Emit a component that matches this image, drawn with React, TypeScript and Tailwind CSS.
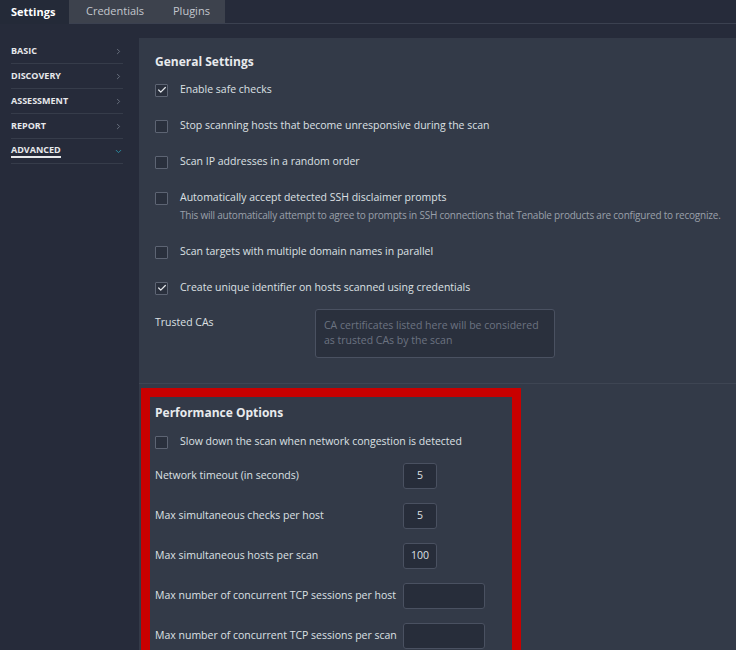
import { Check, ChevronRight, ChevronDown } from "lucide-react";

const font = { fontFamily: '"Open Sans", "Liberation Sans", sans-serif' };

const sideItems = ["BASIC", "DISCOVERY", "ASSESSMENT", "REPORT", "ADVANCED"];

function Box({ checked }: { checked?: boolean }) {
    return (
        <div className="w-[13px] h-[13px] shrink-0 border border-[#5d6473] bg-[#2a303d] rounded-[1px] flex items-center justify-center">
            {checked && <Check size={10} strokeWidth={3} className="text-[#e4e7eb]" />}
        </div>
    );
}

function CheckRow({ label, checked, className }: { label: string; checked?: boolean; className: string }) {
    return (
        <div className={`flex items-center h-4 ${className}`}>
            <Box checked={checked} />
            <span className="ml-[12px] text-[10.5px] text-[#dde0e4] whitespace-nowrap">{label}</span>
        </div>
    );
}

function NumRow({ label, value, wide, className }: { label: string; value?: string; wide?: boolean; className: string }) {
    return (
        <div className={`flex items-center h-[26px] ${className}`}>
            <span className="w-[248px] shrink-0 text-[10.5px] text-[#dde0e4] whitespace-nowrap">{label}</span>
            <div
                className={`${wide ? "w-[82px]" : "w-[34px]"} shrink-0 h-[26px] bg-[#272d3a] border border-[#4a5161] rounded-[3px] flex items-center justify-center text-[10.5px] text-[#dde0e4]`}
            >
                {value}
            </div>
        </div>
    );
}

export default function App() {
    return (
        <div style={font} className="w-[736px] h-[650px] overflow-hidden bg-[#262b3a] flex flex-col">
            {/* tabs */}
            <div className="h-[24px] flex border-b border-[#3b4150] shrink-0">
                <div className="w-[69px] h-[24px] -mb-px bg-[#242a38] flex items-center pl-[11px] text-[11px] font-bold text-white">
                    Settings
                </div>
                <div className="w-[86px] bg-[#3d424d] flex items-center pl-[17px] text-[11px] text-[#c3c7ce]">Credentials</div>
                <div className="w-[70px] bg-[#3d424d] flex items-center pl-[18px] text-[11px] text-[#c3c7ce]">Plugins</div>
            </div>

            <div className="flex flex-1">
                {/* sidebar */}
                <div className="w-[139px] shrink-0 pt-[15px] pl-[11px] pr-[16px]">
                    {sideItems.map((item) => {
                        const active = item === "ADVANCED";
                        return (
                            <div key={item} className="h-[25px] border-b border-[#363c4a] flex items-center justify-between">
                                <span
                                    className={`text-[9px] font-bold text-[#e6e8eb] leading-[12px] ${active ? "border-b-2 border-[#e6e8eb]" : ""}`}
                                >
                                    {item}
                                </span>
                                {active ? (
                                    <ChevronDown size={9} strokeWidth={2.5} className="text-[#2b8ea3]" />
                                ) : (
                                    <ChevronRight size={9} strokeWidth={2.5} className="text-[#6b7280]" />
                                )}
                            </div>
                        );
                    })}
                </div>

                {/* content */}
                <div className="flex-1 pt-[14px]">
                    <div className="h-full bg-[#333a48] flex flex-col">
                        <div className="px-4 pt-[16px]">
                            <div className="h-4 flex items-center text-[12px] font-bold text-[#e8eaed]">General Settings</div>
                            <CheckRow className="mt-[12px]" checked label="Enable safe checks" />
                            <CheckRow className="mt-[20px]" label="Stop scanning hosts that become unresponsive during the scan" />
                            <CheckRow className="mt-[20px]" label="Scan IP addresses in a random order" />
                            <CheckRow className="mt-[20px]" label="Automatically accept detected SSH disclaimer prompts" />
                            <div className="mt-[2px] ml-[25px] h-[14px] flex items-center text-[10px] text-[#9aa0aa] whitespace-nowrap tracking-[-0.22px]">
                                This will automatically attempt to agree to prompts in SSH connections that Tenable products are configured to recognize.
                            </div>
                            <CheckRow className="mt-[22px]" label="Scan targets with multiple domain names in parallel" />
                            <CheckRow className="mt-[20px]" checked label="Create unique identifier on hosts scanned using credentials" />
                            <div className="mt-[13px] flex">
                                <span className="w-[160px] mt-[6px] h-4 flex items-center text-[10.5px] text-[#dde0e4]">Trusted CAs</span>
                                <div className="w-[240px] h-[49px] bg-[#2a303d] border border-[#4a5161] rounded-[3px] pl-[8px] pt-[8px] text-[10.5px] leading-[15px] text-[#6c7381]">
                                    CA certificates listed here will be considered
                                    <br />
                                    as trusted CAs by the scan
                                </div>
                            </div>
                        </div>

                        <div className="mt-[25px] border-t border-[#3e4553]" />

                        {/* performance options */}
                        <div className="mt-[4px] ml-[2px] w-[380px] border-[9px] border-[#c80000] pl-[5px] pt-[8px] pb-[20px]">
                            <div className="h-4 flex items-center text-[12px] font-bold text-[#e8eaed]">Performance Options</div>
                            <CheckRow className="mt-[13px]" label="Slow down the scan when network congestion is detected" />
                            <NumRow className="mt-[13px]" label="Network timeout (in seconds)" value="5" />
                            <NumRow className="mt-[14px]" label="Max simultaneous checks per host" value="5" />
                            <NumRow className="mt-[14px]" label="Max simultaneous hosts per scan" value="100" />
                            <NumRow className="mt-[14px]" label="Max number of concurrent TCP sessions per host" wide />
                            <NumRow className="mt-[14px]" label="Max number of concurrent TCP sessions per scan" wide />
                        </div>
                    </div>
                </div>
            </div>
        </div>
    );
}
